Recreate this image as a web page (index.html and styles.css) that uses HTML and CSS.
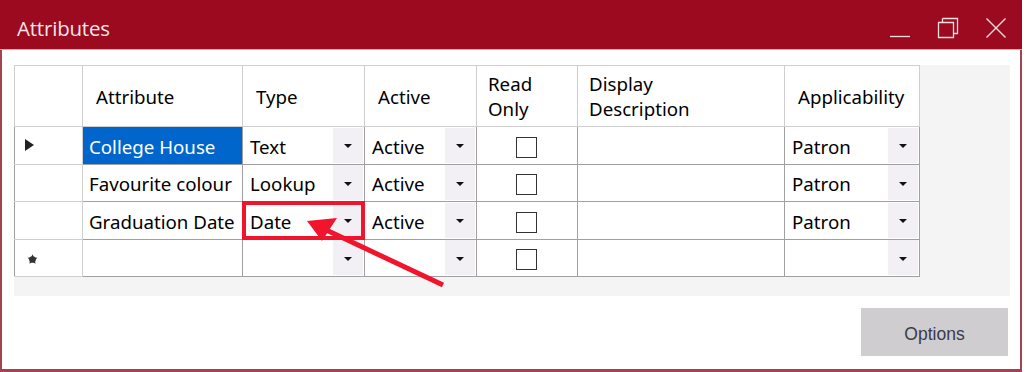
FILE: index.html
```html
<!DOCTYPE html>
<html>
<head>
<meta charset="utf-8">
<link rel="stylesheet" href="styles.css">
</head>
<body>
<div class="window">
  <div class="titlebar">
    <div class="title">Attributes</div>
    <div class="controls">
      <svg class="ctl" width="24" height="24" viewBox="0 0 24 24"><path d="M2 20.5H22" stroke="#f4dde1" stroke-width="1.3" fill="none"/></svg>
      <svg class="ctl" width="24" height="24" viewBox="0 0 24 24"><path d="M6.5 2.5H21.5V17.5H17.5M2.5 6.5H17.5V21.5H2.5Z" stroke="#f4dde1" stroke-width="1.3" fill="none"/><path d="M6.5 2.5V6.5" stroke="#f4dde1" stroke-width="1.3"/></svg>
      <svg class="ctl" width="24" height="24" viewBox="0 0 24 24"><path d="M2.5 2.5L21.5 21.5M21.5 2.5L2.5 21.5" stroke="#f4dde1" stroke-width="1.4" fill="none"/></svg>
    </div>
  </div>
  <div class="content">
    <div class="gridarea">
      <table class="grid">
        <colgroup>
          <col class="c0"><col class="c1"><col class="c2"><col class="c3"><col class="c4"><col class="c5"><col class="c6">
        </colgroup>
        <thead>
          <tr>
            <th class="rowhead"></th>
            <th>Attribute</th>
            <th>Type</th>
            <th>Active</th>
            <th class="twoline">Read<br>Only</th>
            <th class="twoline">Display<br>Description</th>
            <th>Applicability</th>
          </tr>
        </thead>
        <tbody>
          <tr class="r1">
            <td class="rowhead"><svg width="9" height="12" viewBox="0 0 9 12"><path d="M0 0L9 6L0 12Z" fill="#222"/></svg></td>
            <td class="sel">College House</td>
            <td><div class="combo"><span>Text</span><i class="dd"></i></div></td>
            <td><div class="combo"><span>Active</span><i class="dd"></i></div></td>
            <td class="chk"><i class="box"></i></td>
            <td></td>
            <td><div class="combo"><span>Patron</span><i class="dd"></i></div></td>
          </tr>
          <tr class="r2">
            <td class="rowhead"></td>
            <td class="txt">Favourite colour</td>
            <td><div class="combo"><span>Lookup</span><i class="dd"></i></div></td>
            <td><div class="combo"><span>Active</span><i class="dd"></i></div></td>
            <td class="chk"><i class="box"></i></td>
            <td></td>
            <td><div class="combo"><span>Patron</span><i class="dd"></i></div></td>
          </tr>
          <tr class="r3">
            <td class="rowhead"></td>
            <td class="txt">Graduation Date</td>
            <td class="hl"><div class="combo"><span>Date</span><i class="dd"></i></div></td>
            <td><div class="combo"><span>Active</span><i class="dd"></i></div></td>
            <td class="chk"><i class="box"></i></td>
            <td></td>
            <td><div class="combo"><span>Patron</span><i class="dd"></i></div></td>
          </tr>
          <tr class="r4">
            <td class="rowhead"><svg class="star" width="11" height="11" viewBox="0 0 10 10"><path d="M5 0.3L6.3 3.2L9.5 3.5L7.1 5.6L7.8 8.9L5 7.2L2.2 8.9L2.9 5.6L0.5 3.5L3.7 3.2Z" fill="#333"/><circle cx="5" cy="5" r="3" fill="#333"/></svg></td>
            <td></td>
            <td><div class="combo"><span></span><i class="dd"></i></div></td>
            <td><div class="combo"><span></span><i class="dd"></i></div></td>
            <td class="chk"><i class="box"></i></td>
            <td></td>
            <td><div class="combo"><span></span><i class="dd"></i></div></td>
          </tr>
        </tbody>
      </table>
    </div>
    <div class="footer">
      <button class="btn">Options</button>
    </div>
  </div>
  <svg class="arrow" width="1022" height="372" viewBox="0 0 1022 372">
    <line x1="443" y1="285" x2="322" y2="228" stroke="#f0142d" stroke-width="5"/>
    <path d="M307 221L337 218L322 241Z" fill="#f0142d"/>
  </svg>
</div>
</body>
</html>
```

FILE: styles.css
```css
* { box-sizing: border-box; }
html, body { margin: 0; padding: 0; background: #ffffff; }
body { width: 1026px; height: 372px; overflow: hidden; }

.window {
  position: relative;
  width: 1022px;
  height: 372px;
  border-left: 2px solid #a4434f;
  border-right: 2px solid #a4434f;
  border-bottom: 3px solid #a4434f;
  background: #ffffff;
  display: flex;
  flex-direction: column;
  font-family: "Noto Sans", "Open Sans", sans-serif;
}

.titlebar {
  height: 50px;
  margin: 0 -2px;
  background: #9b0a1e;
  display: flex;
  align-items: center;
  justify-content: space-between;
  padding: 0 14px 0 17px;
  border-bottom: 1px solid #d9a9af;
  flex: none;
}
.title {
  color: #f4e6ea;
  font-family: "Open Sans", "Noto Sans", sans-serif;
  font-size: 20.5px;
  letter-spacing: -0.2px;
  padding-top: 6px;
}
.controls { display: flex; gap: 24px; align-items: center; padding-top: 6px; }
.ctl { display: block; }

.content {
  flex: 1;
  display: flex;
  flex-direction: column;
  padding: 15px 12px 0 12px;
}

.gridarea {
  width: 996px;
  height: 231px;
  background: #f4f4f4;
}

.grid {
  border-collapse: collapse;
  table-layout: fixed;
  width: 905px;
  font-size: 18.7px;
  color: #000;
}
.c0 { width: 68px; } .c1 { width: 160px; } .c2 { width: 122px; } .c3 { width: 112px; }
.c4 { width: 101px; } .c5 { width: 207px; } .c6 { width: 135px; }

.grid th {
  height: 61px;
  background: #ffffff;
  border: 1px solid #cfcfcf;
  font-weight: normal;
  text-align: left;
  padding: 0 0 0 13px;
  line-height: 25px;
  vertical-align: middle;
}
.grid th.twoline { padding-left: 11px; }

.grid td {
  height: 37.5px;
  background: #ffffff;
  border: 1px solid #a0a0a0;
  padding: 0;
  white-space: nowrap;
  vertical-align: middle;
}
.grid td.sel, .grid td.txt { padding-top: 2px; }
.grid td.rowhead { border-color: #cfcfcf; border-left-color: #a0a0a0; padding-left: 10px; }
.grid td.rowhead svg { display: block; }
.grid td.rowhead svg.star { margin-left: 2px; margin-top: 3px; }
.grid td.sel { background: #0066cc; color: #ffffff; padding-left: 6px; }
.grid td.txt { padding-left: 6px; }

.combo {
  display: flex;
  align-items: center;
  justify-content: space-between;
  height: 36px;
  padding-left: 7px;
}
.combo span { flex: 1; padding-top: 2px; }
.dd {
  width: 30px;
  height: 35px;
  margin-right: 1px;
  background: #f2eff5;
  display: flex;
  align-items: center;
  justify-content: center;
}
.dd::after {
  content: "";
  border-left: 4px solid transparent;
  border-right: 4px solid transparent;
  border-top: 4px solid #111;
  margin-top: 2px;
}

.chk { text-align: center; }
.box {
  display: inline-block;
  width: 21px;
  height: 21px;
  border: 1px solid #333;
  background: #fff;
  vertical-align: middle;
  margin-left: -2px;
}

.grid td.hl { position: relative; }
.grid td.hl::after {
  content: "";
  position: absolute;
  left: -1px; top: -1px; right: -1px; bottom: -1px;
  border: 4px solid #f0142d;
  pointer-events: none;
}

.footer {
  display: flex;
  justify-content: flex-end;
  padding: 12px 0 0 0;
}
.btn {
  width: 147px;
  height: 48px;
  background: #cfcdd0;
  border: none;
  font-family: "Liberation Sans", Arial, sans-serif;
  font-size: 17.5px;
  color: #3a3a4a;
  padding: 4px 0 0 0;
}

.arrow {
  position: absolute;
  left: -2px;
  top: 0;
  pointer-events: none;
}
```
